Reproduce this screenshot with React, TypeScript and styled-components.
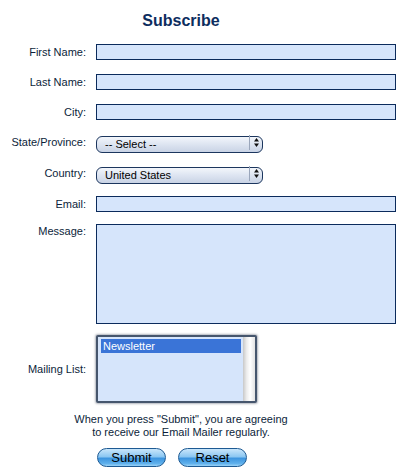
import React from "react";
import styled, { createGlobalStyle } from "styled-components";

const Global = createGlobalStyle`
  html, body { margin: 0; padding: 0; background: #ffffff; }
  body { font-family: "Liberation Sans", Arial, Helvetica, sans-serif; }
`;

const Page = styled.div`
  width: 396px;
  padding-top: 11px;
`;

const Title = styled.h1`
  margin: 0 0 14px 0;
  width: 362px;
  text-align: center;
  font-size: 16px;
  line-height: 19px;
  font-weight: bold;
  color: #0d2d5e;
`;

const Row = styled.div<{ $gap: number; $align?: string }>`
  display: flex;
  align-items: ${(p) => p.$align || "center"};
  margin-bottom: ${(p) => p.$gap}px;
`;

const Label = styled.label<{ $top?: number }>`
  width: 86px;
  flex: none;
  margin-right: 10px;
  text-align: right;
  font-size: 11px;
  line-height: 13px;
  color: #0c1e3a;
  padding-top: ${(p) => p.$top || 0}px;
`;

const TextInput = styled.input`
  box-sizing: border-box;
  width: 300px;
  height: 16px;
  margin: 0;
  padding: 0 3px;
  border: 1px solid #0b2b5c;
  background: #d6e5fb;
  font: 11px "Liberation Sans", Arial, sans-serif;
  outline: none;
`;

const TextArea = styled.textarea`
  box-sizing: border-box;
  width: 300px;
  height: 100px;
  margin: 0;
  padding: 2px 3px;
  border: 1px solid #0b2b5c;
  background: #d6e5fb;
  font: 11px "Liberation Sans", Arial, sans-serif;
  resize: none;
  outline: none;
`;

const SelectWrap = styled.div`
  position: relative;
  width: 167px;
  height: 17px;
`;

const Select = styled.select`
  appearance: none;
  -webkit-appearance: none;
  box-sizing: border-box;
  width: 167px;
  height: 17px;
  margin: 0;
  padding: 0 20px 0 8px;
  border: 1px solid #1c365e;
  border-radius: 6px;
  background: linear-gradient(#f3f6fb 0%, #dfe6f2 45%, #c9d3e5 100%);
  font: 11px "Liberation Sans", Arial, sans-serif;
  color: #000;
  outline: none;
`;

const Arrow = styled.div`
  position: absolute;
  top: 1px;
  right: 1px;
  width: 12px;
  height: 15px;
  border-left: 1px solid #9aa6bb;
  display: flex;
  align-items: center;
  justify-content: center;
  pointer-events: none;
`;

const ListBox = styled.div`
  box-sizing: border-box;
  width: 161px;
  height: 68px;
  border: 2px solid #46566d;
  border-radius: 2px;
  background: #d6e5fb;
  box-shadow: 0 0 2px 1px rgba(60, 70, 90, 0.4);
  display: flex;
`;

const Options = styled.div`
  flex: 1;
  padding: 2px 2px 0 3px;
`;

const Option = styled.div<{ $selected?: boolean }>`
  height: 14px;
  line-height: 14px;
  padding-left: 2px;
  font-size: 11px;
  color: ${(p) => (p.$selected ? "#ffffff" : "#000")};
  background: ${(p) => (p.$selected ? "#3a74d7" : "transparent")};
`;

const Scroll = styled.div`
  width: 12px;
  background: linear-gradient(90deg, #c8c8c8 0%, #ececec 30%, #ffffff 60%, #e2e2e2 100%);
`;

const Note = styled.p`
  margin: 0 0 9px 0;
  width: 362px;
  text-align: center;
  font-size: 11px;
  line-height: 13px;
  color: #0c1e3a;
`;

const Buttons = styled.div`
  display: flex;
  gap: 12px;
  margin-left: 97px;
`;

const Button = styled.button`
  box-sizing: border-box;
  width: 69px;
  height: 19px;
  margin: 0;
  padding: 0;
  border: 1px solid #1d5a93;
  border-radius: 10px;
  background: linear-gradient(#c9e6fb 0%, #8cc7f2 45%, #3d95df 55%, #5fb0ec 85%, #9ad3f8 100%);
  font: 13px "Liberation Sans", Arial, sans-serif;
  line-height: 17px;
  color: #000;
`;

const Updown = () => (
  <svg width="7" height="11" viewBox="0 0 7 11">
    <path d="M3.5 1 L6 4.5 H1 Z" fill="#111" />
    <path d="M3.5 10 L6 6.5 H1 Z" fill="#111" />
  </svg>
);

export default function App() {
  return (
    <>
      <Global />
      <Page>
        <Title>Subscribe</Title>
        <Row $gap={14}>
          <Label>First Name:</Label>
          <TextInput />
        </Row>
        <Row $gap={14}>
          <Label>Last Name:</Label>
          <TextInput />
        </Row>
        <Row $gap={14}>
          <Label>City:</Label>
          <TextInput />
        </Row>
        <Row $gap={14}>
          <Label>State/Province:</Label>
          <SelectWrap>
            <Select defaultValue="">
              <option value="">-- Select --</option>
            </Select>
            <Arrow>
              <Updown />
            </Arrow>
          </SelectWrap>
        </Row>
        <Row $gap={14}>
          <Label>Country:</Label>
          <SelectWrap>
            <Select defaultValue="US">
              <option value="US">United States</option>
            </Select>
            <Arrow>
              <Updown />
            </Arrow>
          </SelectWrap>
        </Row>
        <Row $gap={12}>
          <Label>Email:</Label>
          <TextInput />
        </Row>
        <Row $gap={11} $align="flex-start">
          <Label $top={1}>Message:</Label>
          <TextArea />
        </Row>
        <Row $gap={10}>
          <Label>Mailing List:</Label>
          <ListBox>
            <Options>
              <Option $selected>Newsletter</Option>
            </Options>
            <Scroll />
          </ListBox>
        </Row>
        <Note>
          When you press "Submit", you are agreeing
          <br />
          to receive our Email Mailer regularly.
        </Note>
        <Buttons>
          <Button>Submit</Button>
          <Button>Reset</Button>
        </Buttons>
      </Page>
    </>
  );
}
